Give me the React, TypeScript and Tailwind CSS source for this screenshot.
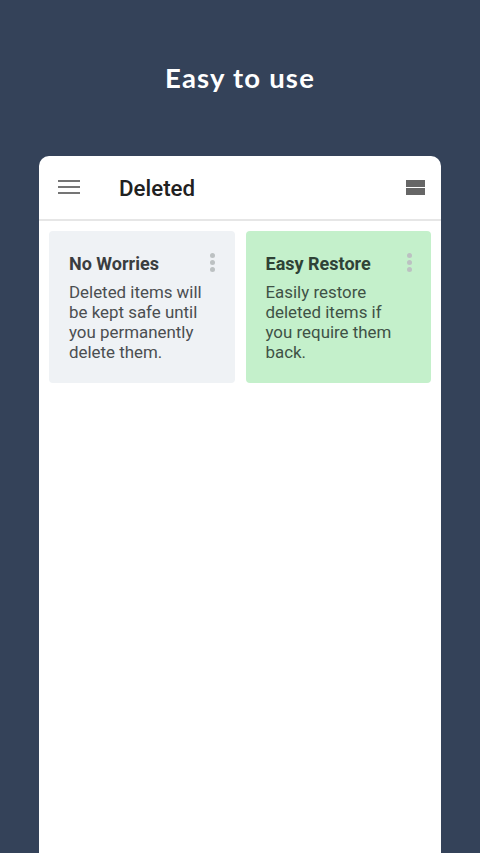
const cards = [
  {
    title: 'No Worries',
    lines: ['Deleted items will', 'be kept safe until', 'you permanently', 'delete them.'],
    bg: 'bg-[#eff2f5]',
    titleColor: 'text-[#3a3d40]',
    bodyColor: 'text-[#4b4e51]',
    dotsRight: 'right-5',
  },
  {
    title: 'Easy Restore',
    lines: ['Easily restore', 'deleted items if', 'you require them', 'back.'],
    bg: 'bg-[#c4f0cb]',
    titleColor: 'text-[#2f4236]',
    bodyColor: 'text-[#3f5246]',
    dotsRight: 'right-[19px]',
  },
]

function Card({ card }: { card: (typeof cards)[number] }) {
  return (
    <div className={`relative flex-1 h-[152px] rounded pl-5 pt-[21px] ${card.bg}`}>
      <div className={`text-[18px] leading-[24px] font-bold ${card.titleColor}`}>{card.title}</div>
      <div className={`mt-[6px] text-[16.9px] leading-[20px] ${card.bodyColor}`}>
        {card.lines.map((line) => (
          <div key={line}>{line}</div>
        ))}
      </div>
      {/* More menu */}
      <div className={`absolute top-[22px] flex flex-col gap-[2px] ${card.dotsRight}`}>
        <span className="w-[5px] h-[5px] rounded-full bg-[#bcc1c2]" />
        <span className="w-[5px] h-[5px] rounded-full bg-[#bcc1c2]" />
        <span className="w-[5px] h-[5px] rounded-full bg-[#bcc1c2]" />
      </div>
    </div>
  )
}

export default function App() {
  return (
    <div className="h-[853px] overflow-hidden bg-[#344259] flex flex-col items-center font-['Roboto',sans-serif]">
      <h1 className="mt-[60px] h-[37px] text-[27.5px] leading-[36px] font-bold tracking-[1.2px] text-white font-['Lato',sans-serif]">
        Easy to use
      </h1>

      <div className="mt-[59px] w-[402px] flex-1 bg-white rounded-t-[10px]">
        {/* Toolbar */}
        <div className="h-[65px] flex items-center border-b-2 border-[#e6e6e6]">
          <div className="ml-[19px] w-[22px] flex flex-col gap-[4px] -mt-[1px]">
            <span className="h-[2px] bg-[#757575]" />
            <span className="h-[2px] bg-[#757575]" />
            <span className="h-[2px] bg-[#757575]" />
          </div>
          <div className="ml-[39px] mt-[3px] text-[22.3px] text-[#212121] font-medium">Deleted</div>
          <div className="ml-auto mr-[16px] w-[19px] flex flex-col gap-[1px]">
            <span className="h-[7px] bg-[#666666]" />
            <span className="h-[7px] bg-[#666666]" />
          </div>
        </div>

        {/* Notes */}
        <div className="flex gap-[11px] pl-[10px] pr-[10px] pt-[10px]">
          {cards.map((card) => (
            <Card key={card.title} card={card} />
          ))}
        </div>
      </div>
    </div>
  )
}
